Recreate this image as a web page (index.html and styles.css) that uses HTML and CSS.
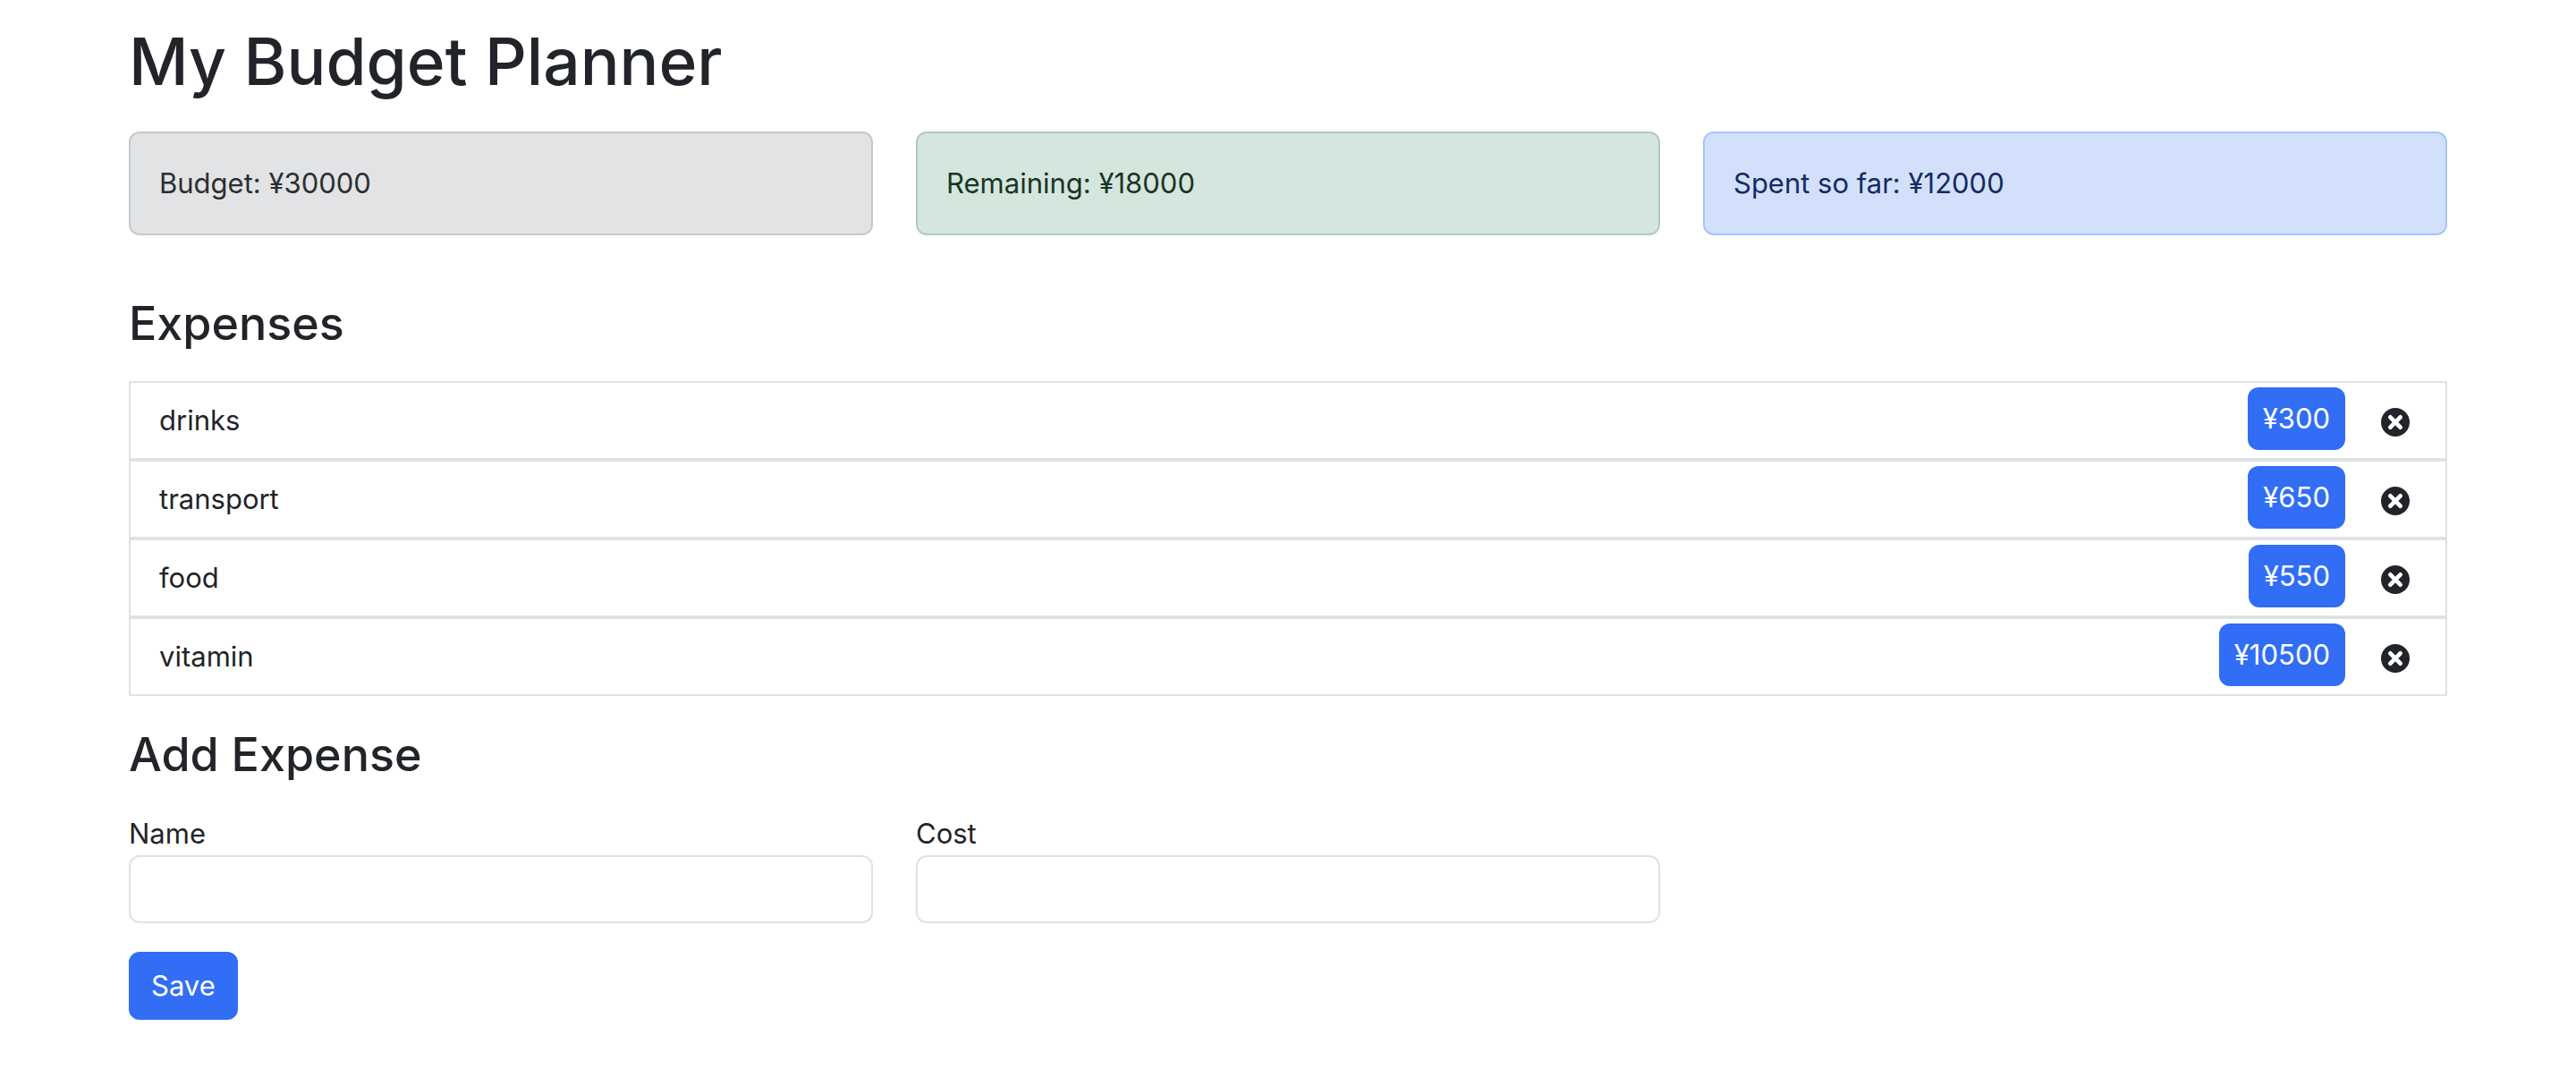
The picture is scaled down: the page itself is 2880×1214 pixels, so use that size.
FILE: index.html
```html
<!DOCTYPE html>
<html lang="en">
<head>
<meta charset="utf-8">
<meta name="viewport" content="width=device-width, initial-scale=1">
<title>My Budget Planner</title>
<link rel="stylesheet" href="styles.css">
</head>
<body>
<svg class="sprite" aria-hidden="true">
  <symbol id="times-circle" viewBox="0 0 32 32">
    <circle cx="16" cy="16" r="16" fill="#212529"/>
    <path d="M10.400 10.400 21.600 21.600M21.600 10.400 10.400 21.600" stroke="#fff" stroke-width="4.800" stroke-linecap="round"/>
  </symbol>
</svg>
<main class="container">
  <h1 class="title">My Budget Planner</h1>
  <div class="row">
    <div class="alert alert-secondary">Budget: ¥30000</div>
    <div class="alert alert-success">Remaining: ¥18000</div>
    <div class="alert alert-primary">Spent so far: ¥12000</div>
  </div>

  <h3 class="heading heading-expenses">Expenses</h3>
  <ul class="list">
    <li class="item"><span>drinks</span><div class="actions"><span class="badge">¥300</span><button class="delete" type="button" aria-label="Delete drinks"><svg class="icon"><use href="#times-circle"/></svg></button></div></li>
    <li class="item"><span>transport</span><div class="actions"><span class="badge">¥650</span><button class="delete" type="button" aria-label="Delete transport"><svg class="icon"><use href="#times-circle"/></svg></button></div></li>
    <li class="item"><span>food</span><div class="actions"><span class="badge">¥550</span><button class="delete" type="button" aria-label="Delete food"><svg class="icon"><use href="#times-circle"/></svg></button></div></li>
    <li class="item"><span>vitamin</span><div class="actions"><span class="badge">¥10500</span><button class="delete" type="button" aria-label="Delete vitamin"><svg class="icon"><use href="#times-circle"/></svg></button></div></li>
  </ul>

  <h3 class="heading heading-add">Add Expense</h3>
  <form>
    <div class="row">
      <div class="field">
        <label for="name">Name</label>
        <input class="input" type="text" id="name" required>
      </div>
      <div class="field">
        <label for="cost">Cost</label>
        <input class="input" type="text" id="cost" required>
      </div>
    </div>
    <button class="save" type="submit">Save</button>
  </form>
</main>
</body>
</html>
```
FILE: styles.css
```css
*, *::before, *::after { box-sizing: border-box; }

body {
  margin: 0;
  background: #fff;
  color: #212529;
  font-family: Inter, "Liberation Sans", sans-serif;
  font-size: 31px;
  line-height: 48px;
}

.sprite { display: none; }

.container {
  max-width: 2640px;
  margin: 0 auto;
  padding: 21px 24px 0;
}

.title {
  margin: 0 0 30px;
  font-size: 73px;
  font-weight: 500;
  line-height: 96px;
}

.row {
  display: grid;
  grid-template-columns: repeat(3, 1fr);
  gap: 48px;
}

.alert {
  padding: 32px;
  border: 2px solid;
  border-radius: 12px;
}
.alert-secondary { background: #e2e3e5; border-color: #c5c8cb; color: #2c2f32; }
.alert-success { background: #d5e6de; border-color: #a9cebc; color: #193525; }
.alert-primary { background: #d3e0fc; border-color: #a6c4fa; color: #132b62; }

.heading {
  margin: 0;
  font-size: 52px;
  font-weight: 500;
  line-height: 68px;
}
.heading-expenses { padding: 65px 0 30px; }
.heading-add { padding: 32px 0 30px; }

.list {
  margin: 0;
  padding: 0;
  list-style: none;
}
.item {
  display: flex;
  justify-content: space-between;
  align-items: center;
  height: 88px;
  padding: 0 40px 0 32px;
  border: 2px solid #dee2e6;
}
.actions {
  display: flex;
  align-items: center;
  gap: 40px;
}
.badge {
  margin-bottom: 4px;
  padding: 11px 17px;
  border-radius: 12px;
  background: #316df5;
  color: #fff;
}
.delete {
  display: block;
  margin-top: 4px;
  padding: 0;
  border: 0;
  background: none;
  cursor: pointer;
}
.icon {
  display: block;
  width: 32px;
  height: 32px;
}

.field { display: flex; flex-direction: column; }
.input {
  width: 100%;
  padding: 12px 24px;
  border: 2px solid #dee2e6;
  border-radius: 12px;
  background: #fff;
  color: inherit;
  font: inherit;
}
.save {
  margin-top: 32px;
  padding: 12px 23px;
  border: 2px solid #316df5;
  border-radius: 12px;
  background: #316df5;
  color: #fff;
  font: inherit;
  cursor: pointer;
}
```
